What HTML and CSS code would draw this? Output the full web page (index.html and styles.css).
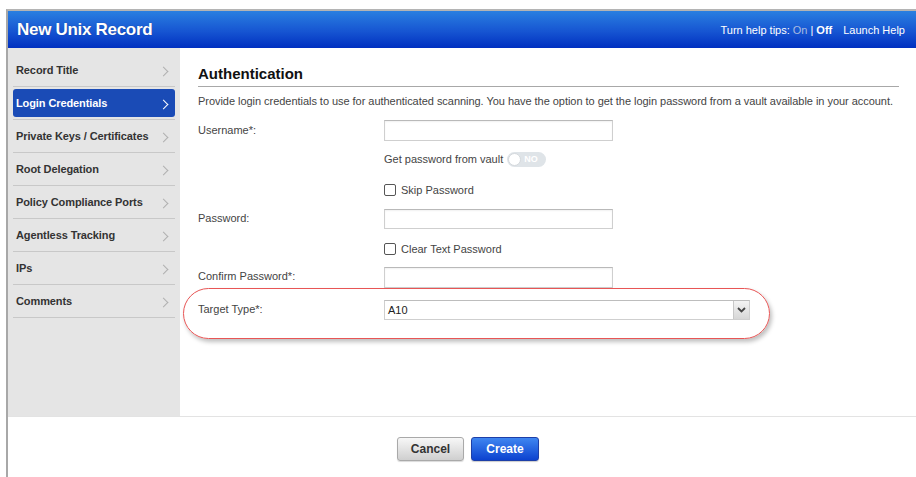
FILE: index.html
```html
<!DOCTYPE html>
<html lang="en">
<head>
<meta charset="utf-8">
<title>New Unix Record</title>
<link rel="stylesheet" href="styles.css">
</head>
<body>
<div class="window">
  <header class="titlebar">
    <h1 class="title">New Unix Record</h1>
    <div class="help">
      <span>Turn help tips:</span>
      <span class="tip-on">On</span>
      <span>|</span>
      <b>Off</b>
      <span class="launch">Launch Help</span>
    </div>
  </header>

  <div class="body">
    <nav class="sidebar">
      <ul class="steps">
        <li><a class="step">Record Title<span class="chev"></span></a></li>
        <li><a class="step active">Login Credentials<span class="chev"></span></a></li>
        <li><a class="step">Private Keys / Certificates<span class="chev"></span></a></li>
        <li><a class="step">Root Delegation<span class="chev"></span></a></li>
        <li><a class="step">Policy Compliance Ports<span class="chev"></span></a></li>
        <li><a class="step">Agentless Tracking<span class="chev"></span></a></li>
        <li><a class="step">IPs<span class="chev"></span></a></li>
        <li><a class="step">Comments<span class="chev"></span></a></li>
      </ul>
    </nav>

    <main class="content">
      <h2 class="section-title">Authentication</h2>
      <p class="desc">Provide login credentials to use for authenticated scanning. You have the option to get the login password from a vault available in your account.</p>

      <div class="form">
        <div class="row r-user">
          <label class="lbl">Username*:</label>
          <input class="field" type="text">
        </div>
        <div class="row r-vault">
          <span class="lbl"></span>
          <span class="vault">Get password from vault</span>
          <span class="toggle"><span class="knob"></span><span class="toggle-text">NO</span></span>
        </div>
        <div class="row r-skip">
          <span class="lbl"></span>
          <label class="check"><span class="box"></span>Skip Password</label>
        </div>
        <div class="row r-pass">
          <label class="lbl">Password:</label>
          <input class="field" type="password">
        </div>
        <div class="row r-clear">
          <span class="lbl"></span>
          <label class="check"><span class="box"></span>Clear Text Password</label>
        </div>
        <div class="row r-confirm">
          <label class="lbl">Confirm Password*:</label>
          <input class="field" type="password">
        </div>
        <div class="row r-target">
          <span class="ring"></span>
          <label class="lbl">Target Type*:</label>
          <div class="select">
            <span class="select-value">A10</span>
            <span class="select-btn">
              <svg width="9" height="6" viewBox="0 0 9 6"><path d="M1 1 L4.5 4.5 L8 1" fill="none" stroke="#444" stroke-width="1.8"/></svg>
            </span>
          </div>
        </div>
      </div>
    </main>
  </div>

  <footer class="footer">
    <button class="btn btn-cancel">Cancel</button>
    <button class="btn btn-create">Create</button>
  </footer>
</div>
</body>
</html>
```

FILE: styles.css
```css
html, body {
  margin: 0;
  padding: 0;
  background: #fff;
  overflow: hidden;
}

body {
  font-family: "Liberation Sans", Arial, sans-serif;
  color: #333;
  height: 477px;
}

.window {
  margin: 9px 0 0 6px;
  width: 922px;
  border-top: 2px solid #b4b4b4;
  border-left: 2px solid #a8a8a8;
  height: 470px;
  display: flex;
  flex-direction: column;
}

/* blue title bar */
.titlebar {
  height: 37px;
  flex: none;
  display: flex;
  align-items: center;
  justify-content: space-between;
  padding: 0 25px 0 9px;
  background: linear-gradient(#2a7fe0 0%, #1655d2 55%, #0030c0 100%);
  color: #fff;
}

.title {
  margin: 0;
  font-size: 17px;
  font-weight: bold;
  letter-spacing: -0.3px;
  text-shadow: 0 0 1px rgba(0, 0, 30, 0.4);
}

.help {
  font-size: 11px;
  display: flex;
  gap: 3px;
  padding-top: 1px;
}

.help b { font-weight: bold; }
.tip-on { color: #a9bbe0; }
.launch { margin-left: 8px; }

/* body: sidebar + content */
.body {
  display: flex;
  height: 368px;
  flex: none;
}

.sidebar {
  width: 172px;
  flex: none;
  background: #e5e5e5;
  padding: 6px 5px 0 5px;
  box-sizing: border-box;
}

.steps {
  list-style: none;
  margin: 0;
  padding: 0;
}

.steps li {
  padding: 2px 0;
  border-bottom: 1px solid #c8c8c8;
}

.step {
  display: flex;
  align-items: center;
  justify-content: space-between;
  height: 28px;
  padding: 0 5px 0 3px;
  border-radius: 3px;
  font-size: 11px;
  font-weight: bold;
  letter-spacing: -0.1px;
  color: #333;
}

.step.active {
  background: #1a4bb6;
  color: #fff;
}

.chev {
  width: 6px;
  height: 6px;
  border-right: 1.5px solid #b0b0b0;
  border-top: 1.5px solid #b0b0b0;
  transform: rotate(45deg);
  margin-right: 3px;
  margin-top: 2px;
}

.step.active .chev {
  border-color: #fff;
}

/* main content */
.content {
  flex: 1;
  padding: 0 31px 0 18px;
}

.section-title {
  margin: 17px 0 0 0;
  font-size: 15px;
  font-weight: bold;
  color: #111;
  line-height: 18px;
  padding-bottom: 3px;
  border-bottom: 1px solid #a8a8a8;
}

.desc {
  margin: 8px 0 0 0;
  font-size: 11px;
  color: #444;
  line-height: 13px;
  letter-spacing: -0.04px;
}

.form {
  margin-top: 12px;
}

.row {
  display: flex;
  align-items: center;
  position: relative;
  font-size: 11px;
  color: #444;
}

.lbl {
  width: 186px;
  flex: none;
}

.r-user { height: 21px; }
.r-vault { height: 18px; margin-top: 9px; }
.r-skip { height: 18px; margin-top: 13px; }
.r-pass { height: 20px; margin-top: 10px; }
.r-clear { height: 18px; margin-top: 11px; }
.r-confirm { height: 21px; margin-top: 9px; }
.r-target { height: 20px; margin-top: 12px; }

.r-user .lbl,
.r-pass .lbl,
.r-confirm .lbl,
.r-target .lbl {
  align-self: flex-start;
  padding-top: 3px;
}

.r-user .lbl { padding-top: 4px; }

.field {
  width: 229px;
  height: 100%;
  box-sizing: border-box;
  margin: 0;
  border: 1px solid #cfcfcf;
  border-top-color: #b9b9b9;
  box-shadow: inset 0 1px 2px rgba(0, 0, 0, 0.06);
  background: #fff;
  padding: 0 4px;
  font: inherit;
}

.vault { color: #444; }

.toggle {
  display: inline-flex;
  align-items: center;
  margin-left: 4px;
  width: 39px;
  height: 15px;
  border-radius: 8px;
  background: #dfe4e8;
  position: relative;
}

.knob {
  width: 13px;
  height: 13px;
  border-radius: 50%;
  background: #fff;
  border: 1px solid #d4d8dc;
  box-sizing: border-box;
  margin-left: 1px;
}

.toggle-text {
  font-size: 9px;
  font-weight: bold;
  color: #fff;
  margin-left: 3px;
}

.check {
  display: flex;
  align-items: center;
  color: #444;
}

.box {
  width: 12px;
  height: 12px;
  box-sizing: border-box;
  border: 1px solid #555;
  border-radius: 2px;
  background: #fff;
  margin-right: 5px;
}

.select {
  width: 366px;
  height: 100%;
  box-sizing: border-box;
  border: 1px solid #cfcfcf;
  border-top-color: #bdbdbd;
  display: flex;
  align-items: center;
  justify-content: space-between;
  background: #fff;
}

.select-value {
  padding-left: 3px;
  color: #222;
}

.select-btn {
  width: 15px;
  height: 100%;
  border-left: 1px solid #c8c8c8;
  background: linear-gradient(#f4f4f4, #d6d6d6);
  display: flex;
  align-items: center;
  justify-content: center;
}

/* red highlight around the target type row */
.ring {
  position: absolute;
  left: -15px;
  top: -12px;
  width: 587px;
  height: 51px;
  box-sizing: border-box;
  border: 1.5px solid #e85555;
  border-radius: 26px;
  box-shadow: 2px 3px 4px rgba(0, 0, 0, 0.25);
  pointer-events: none;
}

/* footer with action buttons */
.footer {
  flex: 1;
  border-top: 1px solid #e3e3e3;
  display: flex;
  justify-content: center;
  align-items: flex-start;
  gap: 7px;
  padding-top: 20px;
  padding-right: 2px;
}

.btn {
  height: 24px;
  border-radius: 3px;
  font-family: "Liberation Sans", Arial, sans-serif;
  font-size: 12px;
  font-weight: bold;
  padding: 0;
  cursor: pointer;
}

.btn-cancel {
  width: 67px;
  color: #333;
  border: 1px solid #a9a9a9;
  background: linear-gradient(#f7f7f7, #cfcfcf);
  box-shadow: 0 1px 1px rgba(0, 0, 0, 0.15);
}

.btn-create {
  width: 68px;
  color: #fff;
  border: 1px solid #1d3fa8;
  background: linear-gradient(#3f86f0, #0c42cf);
  box-shadow: 0 1px 1px rgba(0, 0, 0, 0.2);
}
```
